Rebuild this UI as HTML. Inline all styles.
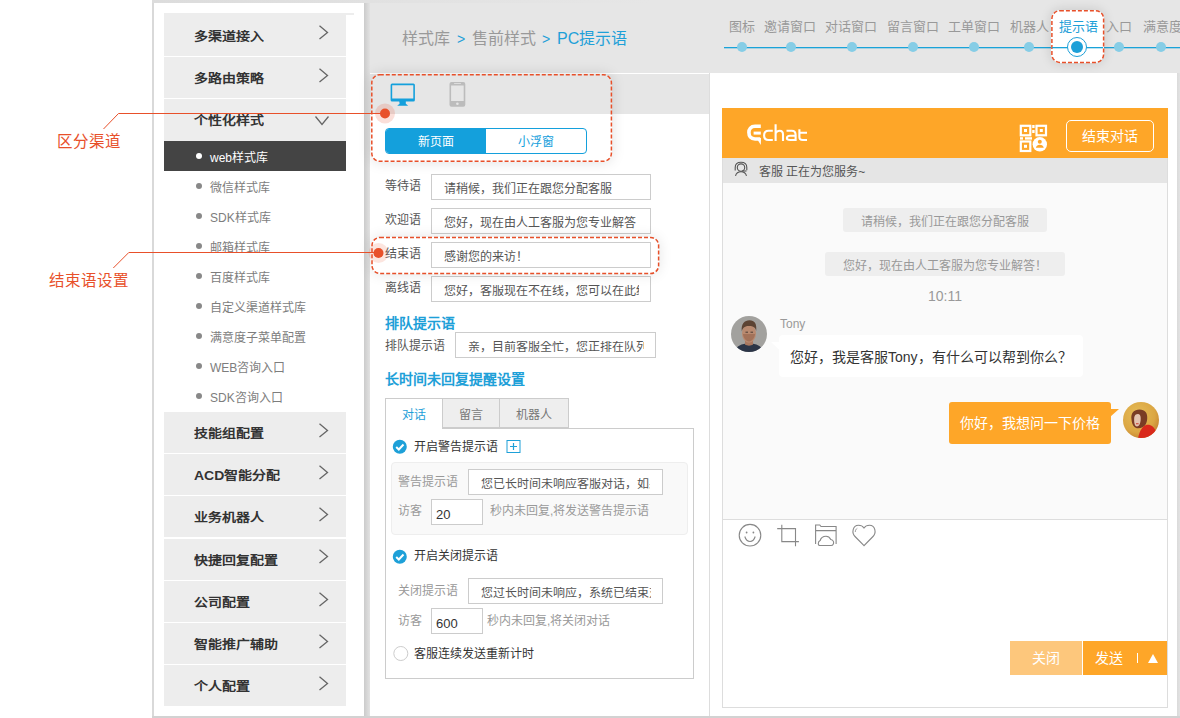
<!DOCTYPE html>
<html lang="zh-CN"><head><meta charset="utf-8">
<style>
*{margin:0;padding:0;box-sizing:border-box}
html,body{width:1180px;height:718px;overflow:hidden;background:#fff;font-family:"Liberation Sans",sans-serif;color:#333}
.a{position:absolute}
.t{position:absolute;white-space:nowrap;line-height:1}
/* app bg */
#app{position:absolute;left:152px;top:0;width:1028px;height:718px;background:#e6e6e6;border-left:2px solid #d9d9d9}
#side{position:absolute;left:154px;top:3px;width:210px;height:713px;background:#fff}
.mi{position:absolute;left:164px;width:182px;height:41px;background:#ededed}
.mi .t{left:30px;top:16px;font-size:14px;font-weight:bold;color:#333;transform-origin:0 0;transform:scaleY(.86)}
.chev{position:absolute;left:154px;top:10.5px}
.si{position:absolute;left:164px;width:182px;height:30px}
.si .dot{position:absolute;left:32px;top:12px;width:6px;height:6px;border-radius:50%;background:#888}
.si .t{left:46px;top:10.5px;font-size:12px;color:#7d7d7d}
.red{color:#e8502a}
.nav{position:absolute;top:19.5px;font-size:13px;color:#999;white-space:nowrap;line-height:1;transform:translateX(-50%)}
.ndot{position:absolute;top:42px;width:10px;height:10px;margin-left:-5px;border-radius:50%;background:#86cde6}
.lbl{position:absolute;font-size:12px;color:#555;white-space:nowrap;line-height:1}
.inp{position:absolute;border:1px solid #ccc;background:#fff;overflow:hidden}
.inp .t{font-size:12px;color:#555;margin-top:1px}
</style></head><body>
<div id="app"></div>
<div id="side"></div>

<!-- sidebar menu -->
<div class="a" style="left:164px;top:13px;width:190px;height:2px;background:#ededed"></div>
<div class="mi" style="top:14px;height:42px"><span class="t" style="top:17px">多渠道接入</span><svg class="chev" width="12" height="16"><path d="M1.5 0.8 L9.5 7.4 L1.5 14" fill="none" stroke="#666" stroke-width="1.3"/></svg></div>
<div class="mi" style="top:57px"><span class="t">多路由策略</span><svg class="chev" width="12" height="16"><path d="M1.5 0.8 L9.5 7.4 L1.5 14" fill="none" stroke="#666" stroke-width="1.3"/></svg></div>
<div class="mi" style="top:99px;height:42px"><span class="t">个性化样式</span><svg class="chev" style="left:150px;top:16px" width="16" height="12"><path d="M1.5 1.5 L8 9.5 L14.5 1.5" fill="none" stroke="#666" stroke-width="1.3"/></svg></div>
<div class="si" style="top:141px;background:#444"><span class="dot" style="background:#fff"></span><span class="t" style="color:#fff">web样式库</span></div>
<div class="si" style="top:171px"><span class="dot"></span><span class="t">微信样式库</span></div>
<div class="si" style="top:201px"><span class="dot"></span><span class="t">SDK样式库</span></div>
<div class="si" style="top:231px"><span class="dot"></span><span class="t">邮箱样式库</span></div>
<div class="si" style="top:261px"><span class="dot"></span><span class="t">百度样式库</span></div>
<div class="si" style="top:291px"><span class="dot"></span><span class="t">自定义渠道样式库</span></div>
<div class="si" style="top:321px"><span class="dot"></span><span class="t">满意度子菜单配置</span></div>
<div class="si" style="top:351px"><span class="dot"></span><span class="t">WEB咨询入口</span></div>
<div class="si" style="top:381px"><span class="dot"></span><span class="t">SDK咨询入口</span></div>
<div class="mi" style="top:412px"><span class="t">技能组配置</span><svg class="chev" width="12" height="16"><path d="M1.5 0.8 L9.5 7.4 L1.5 14" fill="none" stroke="#666" stroke-width="1.3"/></svg></div>
<div class="mi" style="top:454px"><span class="t">ACD智能分配</span><svg class="chev" width="12" height="16"><path d="M1.5 0.8 L9.5 7.4 L1.5 14" fill="none" stroke="#666" stroke-width="1.3"/></svg></div>
<div class="mi" style="top:496.4px"><span class="t">业务机器人</span><svg class="chev" width="12" height="16"><path d="M1.5 0.8 L9.5 7.4 L1.5 14" fill="none" stroke="#666" stroke-width="1.3"/></svg></div>
<div class="mi" style="top:538.7px"><span class="t">快捷回复配置</span><svg class="chev" width="12" height="16"><path d="M1.5 0.8 L9.5 7.4 L1.5 14" fill="none" stroke="#666" stroke-width="1.3"/></svg></div>
<div class="mi" style="top:581px"><span class="t">公司配置</span><svg class="chev" width="12" height="16"><path d="M1.5 0.8 L9.5 7.4 L1.5 14" fill="none" stroke="#666" stroke-width="1.3"/></svg></div>
<div class="mi" style="top:623.2px"><span class="t">智能推广辅助</span><svg class="chev" width="12" height="16"><path d="M1.5 0.8 L9.5 7.4 L1.5 14" fill="none" stroke="#666" stroke-width="1.3"/></svg></div>
<div class="mi" style="top:665.4px"><span class="t">个人配置</span><svg class="chev" width="12" height="16"><path d="M1.5 0.8 L9.5 7.4 L1.5 14" fill="none" stroke="#666" stroke-width="1.3"/></svg></div>

<!-- shadow strip -->
<div class="a" style="left:364px;top:3px;width:6px;height:715px;background:linear-gradient(to right,#cbcbcb,#e2e2e2)"></div>
<div class="a" style="left:152px;top:0;width:1028px;height:3px;background:linear-gradient(to right,#dcdcdc,#e2e2e2 260px,#e6e6e6 500px)"></div>

<!-- breadcrumb -->
<div class="t" style="left:402px;top:31px;font-size:16px;color:#999">样式库</div>
<div class="t" style="left:457px;top:32px;font-size:14px;color:#1ea0d8">&gt;</div>
<div class="t" style="left:472px;top:31px;font-size:16px;color:#999">售前样式</div>
<div class="t" style="left:542px;top:32px;font-size:14px;color:#1ea0d8">&gt;</div>
<div class="t" style="left:557px;top:31px;font-size:16px;color:#1ea0d8">PC提示语</div>

<!-- NAV -->
<div class="a" style="left:724px;top:47px;width:456px;height:1px;background:#1aa3d9;box-shadow:0 0.6px 0 rgba(26,163,217,.5)"></div>
<div class="nav" style="left:742px">图标</div><div class="ndot" style="left:742px"></div>
<div class="nav" style="left:790px">邀请窗口</div><div class="ndot" style="left:791px"></div>
<div class="nav" style="left:851px">对话窗口</div><div class="ndot" style="left:852px"></div>
<div class="nav" style="left:913px">留言窗口</div><div class="ndot" style="left:913px"></div>
<div class="nav" style="left:974px">工单窗口</div><div class="ndot" style="left:974px"></div>
<div class="nav" style="left:1029px">机器人</div><div class="ndot" style="left:1029px"></div>
<div class="a" style="left:1051px;top:10px;width:53px;height:53px;background:#fff;border-radius:9px;box-shadow:0 0 12px rgba(0,0,0,.14)"></div>
<svg class="a" style="left:1040px;top:0" width="80" height="80" viewBox="1040 0 80 80"><rect x="1051.9" y="10.7" width="51.7" height="51.7" rx="8" fill="none" stroke="#e8502a" stroke-width="1.5" stroke-dasharray="4 2"/></svg>
<div class="a" style="left:1052px;top:47px;width:51px;height:1px;background:#1aa3d9;box-shadow:0 0.6px 0 rgba(26,163,217,.5)"></div>
<div class="nav" style="left:1078px;color:#1ea0d8">提示语</div>
<div class="a" style="left:1067px;top:37px;width:20px;height:20px;border-radius:50%;background:#fff;border:1px solid #1ea0d8"></div>
<div class="a" style="left:1071px;top:41px;width:12px;height:12px;border-radius:50%;background:#1ea0d8"></div>
<div class="nav" style="left:1119px">入口</div><div class="ndot" style="left:1119px"></div>
<div class="nav" style="left:1162px">满意度</div><div class="ndot" style="left:1161px"></div>

<!-- FORM PANEL -->
<div class="a" style="left:370px;top:73px;width:340px;height:643px;background:#fff;border-right:1px solid #ddd"></div>
<div class="a" style="left:370px;top:74px;width:339px;height:40px;background:#e6e6e6"></div>


<!-- form header icons -->
<svg class="a" style="left:385px;top:78px" width="90" height="32" viewBox="385 78 90 32">
<path d="M392.1 83.6 H413.4 A1.5 1.5 0 0 1 414.9 85.1 V99.9 A1.5 1.5 0 0 1 413.4 101.4 H392.1 A1.5 1.5 0 0 1 390.6 99.9 V85.1 A1.5 1.5 0 0 1 392.1 83.6 Z M392.2 85.2 V98.5 H413.3 V85.2 Z" fill="#14a0dc" fill-rule="evenodd"/>
<path d="M399.2 101 H405.8 V103.8 L408.2 105.8 H397.2 L399.6 103.8 Z" fill="#14a0dc"/>
<path d="M451.5 82 H463.3 A2 2 0 0 1 465.3 84 V104.8 A2 2 0 0 1 463.3 106.8 H451.5 A2 2 0 0 1 449.5 104.8 V84 A2 2 0 0 1 451.5 82 Z M451.1 85.6 V100.9 H463.7 V85.6 Z" fill="#bcbcbc" fill-rule="evenodd"/>
<path d="M454.5 83.5 H460.5" stroke="#e0e0e0" stroke-width="0.9" stroke-linecap="round"/>
<circle cx="457.4" cy="103.8" r="1.3" fill="#e6e6e6"/>
</svg>
<!-- segmented -->
<div class="a" style="left:385px;top:128px;width:202px;height:26px;border:1px solid #14a0dc;border-radius:4px;overflow:hidden;background:#fff">
<div class="a" style="left:0;top:0;width:100px;height:24px;background:#14a0dc"></div>
<div class="t" style="left:32px;top:7px;font-size:12px;color:#fff">新页面</div>
<div class="t" style="left:132px;top:7px;font-size:12px;color:#14a0dc">小浮窗</div>
</div>
<!-- inputs -->
<div class="lbl" style="left:385px;top:180px">等待语</div>
<div class="inp" style="left:431px;top:174px;width:220px;height:26px"><span class="t" style="left:12px;top:7px">请稍候，我们正在跟您分配客服</span></div>
<div class="lbl" style="left:385px;top:214px">欢迎语</div>
<div class="inp" style="left:431px;top:208px;width:220px;height:26px"><span class="t" style="left:12px;top:7px">您好，现在由人工客服为您专业解答</span></div>
<div class="lbl" style="left:385px;top:248px">结束语</div>
<div class="inp" style="left:431px;top:242px;width:220px;height:26px"><span class="t" style="left:12px;top:7px">感谢您的来访！</span></div>
<div class="lbl" style="left:385px;top:282px">离线语</div>
<div class="inp" style="left:431px;top:276px;width:220px;height:26px"><span class="t" style="left:12px;top:7px;width:194.5px;overflow:hidden">您好，客服现在不在线，您可以在此给我们留言</span></div>
<div class="t" style="left:385px;top:316px;font-size:14px;font-weight:bold;color:#1ea0d8">排队提示语</div>
<div class="lbl" style="left:385px;top:339.5px">排队提示语</div>
<div class="inp" style="left:455px;top:332px;width:201px;height:26px"><span class="t" style="left:12px;top:7px;width:176px;overflow:hidden">亲，目前客服全忙，您正排在队列中</span></div>
<div class="t" style="left:385px;top:372px;font-size:14px;font-weight:bold;color:#1ea0d8">长时间未回复提醒设置</div>
<!-- tabs -->
<div class="a" style="left:385px;top:428px;width:309px;height:251px;border:1px solid #ccc;background:#fff"></div>
<div class="a" style="left:385px;top:398px;width:58px;height:31px;border:1px solid #ccc;border-bottom:none;background:#fff"></div>
<div class="a" style="left:442px;top:398px;width:58px;height:30px;border:1px solid #ccc;background:#eee"></div>
<div class="a" style="left:499px;top:398px;width:70px;height:30px;border:1px solid #ccc;background:#eee"></div>
<div class="t" style="left:402px;top:408.5px;font-size:12px;color:#1ea0d8">对话</div>
<div class="t" style="left:459px;top:408.5px;font-size:12px;color:#777">留言</div>
<div class="t" style="left:516px;top:408.5px;font-size:12px;color:#777">机器人</div>
<!-- check 1 -->
<svg class="a" style="left:392px;top:439px" width="16" height="16"><circle cx="7.8" cy="7.8" r="7" fill="#1ea0d8"/><path d="M4.2 8 L6.8 10.5 L11.5 5.5" fill="none" stroke="#fff" stroke-width="2"/></svg>
<div class="t" style="left:414px;top:440.5px;font-size:12px;color:#333">开启警告提示语</div>
<svg class="a" style="left:506px;top:440px" width="15" height="13"><rect x="1" y="0.5" width="13" height="12" fill="none" stroke="#1ea0d8" stroke-width="1"/><path d="M7.5 3 v7 M4 6.5 h7" stroke="#1ea0d8" stroke-width="1.2"/></svg>
<div class="a" style="left:391px;top:462px;width:297px;height:73px;border:1px solid #eee;border-radius:4px;background:#f9f9f9"></div>
<div class="lbl" style="left:398px;top:475.5px;color:#999">警告提示语</div>
<div class="inp" style="left:468px;top:469px;width:195px;height:26px"><span class="t" style="left:12px;top:7px;width:168.5px;overflow:hidden">您已长时间未响应客服对话，如果还有问题</span></div>
<div class="lbl" style="left:398px;top:505px;color:#999">访客</div>
<div class="inp" style="left:431px;top:499px;width:52px;height:26px"><span class="t" style="left:4px;top:7px;font-size:13px;color:#333">20</span></div>
<div class="lbl" style="left:490px;top:505px;color:#999">秒内未回复,将发送警告提示语</div>
<!-- check 2 -->
<svg class="a" style="left:392px;top:549px" width="16" height="16"><circle cx="7.8" cy="7.8" r="7" fill="#1ea0d8"/><path d="M4.2 8 L6.8 10.5 L11.5 5.5" fill="none" stroke="#fff" stroke-width="2"/></svg>
<div class="t" style="left:414px;top:549.5px;font-size:12px;color:#333">开启关闭提示语</div>
<div class="lbl" style="left:398px;top:585px;color:#999">关闭提示语</div>
<div class="inp" style="left:468px;top:578px;width:195px;height:26px"><span class="t" style="left:12px;top:7px;width:169.5px;overflow:hidden">您过长时间未响应，系统已结束对话</span></div>
<div class="lbl" style="left:398px;top:615px;color:#999">访客</div>
<div class="inp" style="left:431px;top:608px;width:52px;height:26px"><span class="t" style="left:4px;top:7px;font-size:13px;color:#333">600</span></div>
<div class="lbl" style="left:487px;top:615px;color:#999">秒内未回复,将关闭对话</div>
<svg class="a" style="left:393px;top:646px" width="16" height="16"><circle cx="7.8" cy="7.5" r="7" fill="#fff" stroke="#ccc" stroke-width="1"/></svg>
<div class="t" style="left:414px;top:648px;font-size:12px;color:#333">客服连续发送重新计时</div>

<!-- PREVIEW PANEL -->
<div class="a" style="left:710px;top:73px;width:467px;height:643px;background:#fff"></div>
<div class="a" style="left:722px;top:108px;width:446px;height:600px;border:1px solid #ddd;background:#fff"></div>
<div class="a" style="left:722px;top:108px;width:446px;height:50px;background:#fea628"></div>
<!-- logo -->
<svg class="a" style="left:745px;top:122px" width="66" height="26" viewBox="0 0 66 26">
<g fill="none" stroke="#fff" stroke-linecap="butt">
<path d="M15.8 4.3 H10 C5.8 4.3 3.9 7.2 3.9 10.6 C3.9 14.2 5.8 17 10 17 H15.2" stroke-width="3.6"/>
<path d="M8.6 11.1 H15.8" stroke-width="3"/>
<path d="M27.8 8.7 H23.5 C20.3 8.7 19.1 10.3 19.1 13.5 C19.1 16.8 20.3 18 23.5 18 H27.8" stroke-width="2.1"/>
<path d="M30.6 2.2 V19 M30.6 11.5 C31.3 9.3 32.5 8.7 34.8 8.7 C37.3 8.7 38 9.8 38 12.5 V19" stroke-width="2.1"/>
<path d="M41.5 8.7 H46.8 C49.6 8.7 50.6 10 50.6 13 V19 M50.6 13.8 H45.2 C42.6 13.8 41.9 15.2 41.9 16.3 C41.9 17.8 42.8 18 45.2 18 H50.6" stroke-width="2.1"/>
<path d="M54.4 7.2 V15 C54.4 17.5 55.3 18 57.8 18 H62 M54.4 10.8 H62" stroke-width="2.1"/>
</g>
<path d="M11.5 16 L15.8 23 L16 16 Z" fill="#fff"/>
</svg>
<!-- qr -->
<svg class="a" style="left:1019px;top:124px" width="29" height="29" viewBox="0 0 29 29">
<g fill="none" stroke="#fff" stroke-width="2.2">
<rect x="1.8" y="1.8" width="9.5" height="9.5"/><rect x="17.5" y="1.8" width="9.5" height="9.5"/><rect x="1.8" y="17.5" width="9.5" height="9.5"/>
</g>
<rect x="5" y="5" width="3" height="3" fill="#fff"/><rect x="20.8" y="5" width="3" height="3" fill="#fff"/><rect x="5" y="20.8" width="3" height="3" fill="#fff"/>
<rect x="13.2" y="1" width="2.4" height="3" fill="#fff"/><rect x="13.2" y="6" width="2.4" height="3" fill="#fff"/>
<rect x="1" y="13.2" width="3" height="2.4" fill="#fff"/><rect x="6" y="13.2" width="7" height="2.4" fill="#fff"/>
<circle cx="20.8" cy="20.3" r="7.2" fill="#fff"/>
<circle cx="20.8" cy="17.8" r="2" fill="#fea628"/>
<path d="M16.8 23.8 C17.3 21.8 18.8 20.8 20.8 20.8 C22.8 20.8 24.3 21.8 24.8 23.8 Z" fill="#fea628"/>
</svg>
<div class="a" style="left:1066px;top:120px;width:88px;height:32px;border:1px solid #fff;border-radius:5px"></div>
<div class="t" style="left:1082px;top:129px;font-size:14px;color:#fff">结束对话</div>
<!-- status -->
<div class="a" style="left:723px;top:158px;width:444px;height:25px;background:#e5e5e5"></div>
<svg class="a" style="left:733px;top:160px" width="16" height="18" viewBox="733 160 16 18">
<g fill="none" stroke="#555" stroke-width="1.1">
<path d="M735.2 170.5 V167.5 C735.2 164 737.5 162.3 741 162.3 C744.5 162.3 746.8 164 746.8 167.5 V170.2"/>
<circle cx="741" cy="167.6" r="3.7"/>
<path d="M742 171 H746.5"/>
<path d="M735.5 175.8 C736.3 173 738.3 171.8 741 171.8 C743.7 171.8 745.7 173 746.5 175.8"/>
</g></svg>
<div class="t" style="left:759px;top:166px;font-size:12px;color:#555">客服 正在为您服务~</div>
<!-- chat area -->
<div class="a" style="left:723px;top:183px;width:444px;height:337px;background:#fafafa;border-bottom:1px solid #ddd"></div>
<div class="a" style="left:843px;top:208px;width:204px;height:24px;background:#eee;border-radius:3px"></div>
<div class="t" style="left:861px;top:216px;font-size:12px;color:#999">请稍候，我们正在跟您分配客服</div>
<div class="a" style="left:825px;top:252px;width:240px;height:24px;background:#eee;border-radius:3px"></div>
<div class="t" style="left:843px;top:260px;font-size:12px;color:#999">您好，现在由人工客服为您专业解答！</div>
<div class="t" style="left:928px;top:289px;font-size:14px;color:#999">10:11</div>
<!-- tony -->
<svg class="a" style="left:731px;top:316px" width="36" height="36" viewBox="0 0 36 36">
<defs><clipPath id="c1"><circle cx="18" cy="18" r="18"/></clipPath></defs>
<g clip-path="url(#c1)">
<rect width="36" height="36" fill="#a2a19e"/>
<path d="M3 37 C5 30 10 27.5 18 27.5 C26 27.5 31 30 33 37 Z" fill="#2b3547"/>
<path d="M14 22 h8 v6.5 C20 30 16 30 14 28.5z" fill="#a87860"/>
<ellipse cx="18" cy="17.5" rx="7" ry="9.2" fill="#b98a70"/>
<path d="M12 18 C12 21 15 25.5 18 25.5 C21 25.5 24 21 24 18" fill="#a37259"/>
<path d="M10.8 15.5 C10 7.5 13.5 4.2 18.5 4.2 C23.5 4.2 26 7.5 25.2 15 C24.5 11.5 22.5 10 18 10 C14 10 11.8 11.5 10.8 15.5z" fill="#5c4333"/>
<path d="M14.5 16.2 h2.5 M19.5 16.2 h2.5" stroke="#4a3a33" stroke-width="1"/>
</g></svg>
<div class="t" style="left:780px;top:318px;font-size:12px;color:#999">Tony</div>
<div class="a" style="left:779px;top:335px;width:304px;height:42px;background:#fff;border-radius:4px"></div>
<svg class="a" style="left:771px;top:342px" width="10" height="10"><path d="M0 0 L9 0 L9 8.5z" fill="#fff"/></svg>
<div class="t" style="left:790px;top:350px;font-size:14px;color:#333">您好，我是客服Tony，有什么可以帮到你么？</div>
<!-- user -->
<div class="a" style="left:949px;top:402px;width:162px;height:42px;background:#fea628;border-radius:3px"></div>
<svg class="a" style="left:1110px;top:408px" width="10" height="10"><path d="M0 1 L9 1 L0 9z" fill="#fea628"/></svg>
<div class="t" style="left:960px;top:415.5px;font-size:14px;color:#fff">你好，我想问一下价格</div>
<svg class="a" style="left:1123px;top:402px" width="36" height="36" viewBox="0 0 36 36">
<defs><clipPath id="c2"><circle cx="18" cy="18" r="18"/></clipPath>
<radialGradient id="g2" cx="40%" cy="35%" r="75%"><stop offset="0" stop-color="#e6bd58"/><stop offset="0.65" stop-color="#dba643"/><stop offset="1" stop-color="#bf7a2c"/></radialGradient></defs>
<g clip-path="url(#c2)">
<rect width="36" height="36" fill="url(#g2)"/>
<path d="M8.5 17.5 C7.5 11 11 7.5 16.5 7.5 C22 7.5 24.8 11 24.2 17 C23.8 21 22.5 23.5 20 25 C17 26.5 13.5 27 11.5 25 C9.5 23 8.8 20.5 8.5 17.5z" fill="#7a3c24"/>
<path d="M11.2 15.5 C11.6 12.8 13.6 11.8 15.8 12.2 C17.6 12.6 18 15.5 17.6 18.8 C17.2 22.3 15.9 24.5 14 24.5 C12 24.5 10.8 21.5 11.2 15.5z" fill="#e3c3b0"/>
<path d="M13 21.8 h2.6" stroke="#cc3a2a" stroke-width="1.1"/>
<path d="M15 37 C16 30.5 18.5 25 22.5 23.2 C27 21.8 31 24.5 33 29.5 L35 37z" fill="#d9291b"/>
</g></svg>
<!-- toolbar -->
<svg class="a" style="left:730px;top:518px" width="150" height="32" viewBox="730 518 150 32">
<g fill="none" stroke="#888" stroke-width="1.1">
<circle cx="750" cy="535.2" r="10.8"/>
<path d="M744.8 536.5 C746 540.5 748 541.5 750 541.5 C752 541.5 754 540.5 755.2 536.5"/>
<path d="M781.8 524.8 V541.6 H798.9 M777.2 528.6 H795.5 V546.2"/>
<path d="M815.6 544 V525 H819.8 L821 526.5 H836.1 V544 M815.6 530.6 H836.1"/>
<path d="M820 545.5 C817.8 545.5 817.6 541.5 820.2 540.5 C821 537.5 823.5 536.3 826 536.3 C828.5 536.3 830 538 830.8 539.5 C833.5 539.8 834.2 542.5 833.2 544.3 C832.8 545.2 832 545.5 831 545.5 Z"/>
<path d="M864 545.6 L855 536.5 C851.5 533 852.5 525.3 858.5 525.3 C861 525.3 863 526.5 864 528 C865 526.5 867 525.3 869.5 525.3 C875.5 525.3 876.5 533 873 536.5 Z"/>
<path d="M855.3 532 C855.3 530.3 856 529 857.3 528.3" stroke-width="0.8"/>
</g>
<circle cx="746.6" cy="532.5" r="0.9" fill="#888"/><circle cx="753.4" cy="532.5" r="0.9" fill="#888"/>
</svg>
<!-- buttons -->
<div class="a" style="left:1010px;top:641px;width:72px;height:34px;background:#fdc77c"></div>
<div class="t" style="left:1032px;top:651px;font-size:14px;color:#fff">关闭</div>
<div class="a" style="left:1083px;top:641px;width:84px;height:34px;background:#fea628"></div>
<div class="t" style="left:1095px;top:651px;font-size:14px;color:#fff">发送</div>
<div class="a" style="left:1137px;top:653px;width:1px;height:10px;background:#fff"></div>
<svg class="a" style="left:1147px;top:653px" width="12" height="11"><path d="M6 1 L11 10 H1z" fill="#fff"/></svg>

<div class="a" style="left:1177px;top:73px;width:3px;height:645px;background:linear-gradient(to right,#dadada,#e2e2e2)"></div>
<div class="a" style="left:152px;top:716px;width:1028px;height:2px;background:#d2d2d2"></div>
<!-- ANNOTATIONS -->
<div class="a" style="left:371px;top:74px;width:241px;height:88px;border-radius:9px;box-shadow:0 0 14px rgba(0,0,0,.13)"></div>
<svg class="a" style="left:360px;top:60px" width="320" height="230" viewBox="360 60 320 230"><rect x="371.8" y="74.7" width="239.6" height="86.6" rx="8" fill="none" stroke="#e8502a" stroke-width="1.5" stroke-dasharray="4 2"/><rect x="372" y="237.5" width="286.6" height="36" rx="8" fill="none" stroke="#e8502a" stroke-width="1.5" stroke-dasharray="4 2"/></svg>
<div class="a" style="left:371px;top:237px;width:288px;height:37px;border-radius:9px;box-shadow:0 0 14px rgba(0,0,0,.11)"></div>
<svg class="a" style="left:0;top:0" width="400" height="300">
<path d="M103.5 129 L118.5 113.5 H385" fill="none" stroke="#e8502a" stroke-width="1"/>
<path d="M113.3 268 L128.8 252.5 H378" fill="none" stroke="#e8502a" stroke-width="1"/>
<circle cx="385" cy="113.5" r="10" fill="#e8502a" fill-opacity="0.18"/>
<circle cx="385" cy="113.5" r="5" fill="#e8502a"/>
<circle cx="378.5" cy="253" r="10" fill="#e8502a" fill-opacity="0.15"/>
<circle cx="378.5" cy="253" r="5" fill="#e8502a"/>
</svg>
<div class="t" style="left:57px;top:134px;font-size:15.5px;color:#e8502a">区分渠道</div>
<div class="t" style="left:49px;top:272.5px;font-size:15.5px;color:#e8502a">结束语设置</div>
</body></html>
